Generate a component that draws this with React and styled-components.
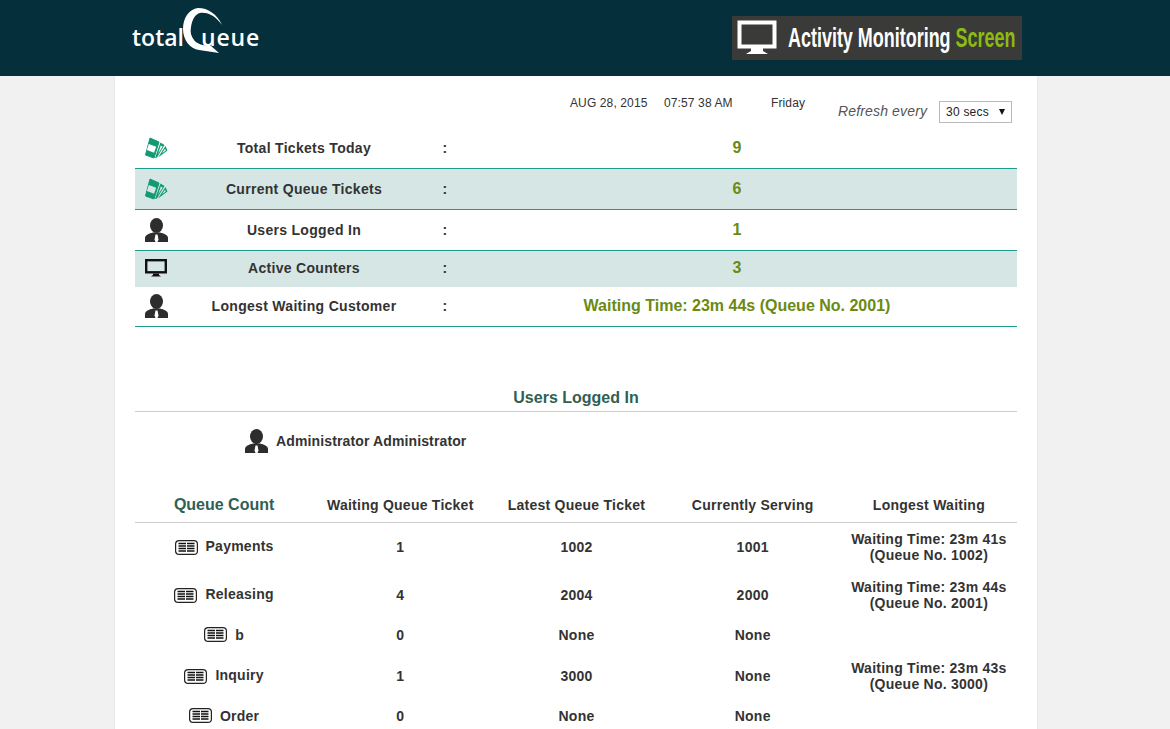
import React from 'react';
import styled, { createGlobalStyle } from 'styled-components';

const GlobalStyle = createGlobalStyle`
  html, body {
    margin: 0;
    height: 100%;
    overflow: hidden;
    background: #f1f1f1;
    font-family: "Liberation Sans", Arial, sans-serif;
    color: #333;
  }
`;

const Header = styled.header`
  height: 76px;
  background: #042f3b;
  display: flex;
  align-items: flex-start;
  justify-content: space-between;
  padding: 0 148px 0 132px;
`;

const Logo = styled.div`
  position: relative;
  width: 128px;
  height: 76px;
  display: flex;
  justify-content: space-between;
  padding-top: 22px;
  box-sizing: border-box;
  color: #fff;
  font: 600 23px/30px "Open Sans", sans-serif;
`;

const LogoPart = styled.span`
  letter-spacing: ${p => p.$ls}px;
`;

const LogoQ = styled.svg`
  position: absolute;
  left: 49px;
  top: 7px;
`;

const Banner = styled.div`
  margin-top: 16px;
  width: 290px;
  height: 44px;
  background: #3a3a38;
  display: flex;
  align-items: center;
  padding-left: 5px;
  box-sizing: border-box;
  gap: 11px;
  svg { flex: none; }
`;

const BannerTitle = styled.div`
  flex: none;
  font: 700 27px/44px "Liberation Sans", sans-serif;
  color: #fff;
  white-space: nowrap;
  margin-right: -120px;
  transform: scaleX(0.665);
  transform-origin: left center;
  span { color: #8dbb13; }
`;

const Panel = styled.main`
  width: 882px;
  margin-left: 114px;
  padding: 0 20px;
  height: 653px;
  background: #fff;
  border-left: 1px solid #e9e9e9;
  border-right: 1px solid #e9e9e9;
`;

const MetaRow = styled.div`
  height: 51px;
  display: flex;
  padding: 20px 0 0 435px;
  box-sizing: border-box;
  font-size: 12px;
  line-height: 14px;
  letter-spacing: 0.12px;
`;

const MetaItem = styled.span`
  width: ${p => p.$w}px;
  flex: none;
`;

const Refresh = styled.div`
  display: flex;
  align-items: center;
  height: 22px;
  margin-top: 4px;
  font: italic 14px "Liberation Sans", sans-serif;
  letter-spacing: 0.15px;
  color: #555;
  gap: 12px;
`;

const SelectBox = styled.div`
  width: 73px;
  height: 22px;
  margin-top: 2px;
  box-sizing: border-box;
  border: 1px solid #bbb;
  padding: 0 6px;
  display: flex;
  align-items: center;
  justify-content: space-between;
  font: 12px "Liberation Sans", sans-serif;
  color: #222;
  letter-spacing: 0.2px;
  &::after {
    content: "";
    border: 3.5px solid transparent;
    border-top: 6px solid #111;
    border-bottom: 0;
  }
`;

const StatRow = styled.div`
  display: grid;
  grid-template-columns: 40px 258px 24px 1fr;
  align-items: center;
  box-sizing: border-box;
  height: ${p => p.$h}px;
  padding-bottom: ${p => p.$lift || 0}px;
  background: ${p => (p.$shade ? '#d5e6e5' : 'transparent')};
  border-bottom: ${p => (p.$line ? '1px solid #1e9c8e' : '0')};
`;

const IconCell = styled.div`
  display: flex;
  padding-left: 10px;
`;

const StatLabel = styled.div`
  text-align: center;
  font-size: 14px;
  font-weight: 700;
  letter-spacing: 0.3px;
`;

const Colon = styled(StatLabel)``;

const StatValue = styled.div`
  text-align: center;
  font-size: 16px;
  font-weight: 700;
  color: #6a8a12;
`;

const SectionTitle = styled.h2`
  margin: 60px 0 0;
  height: 24px;
  font-size: 16px;
  line-height: 22px;
  font-weight: 700;
  text-align: center;
  color: #2f5f55;
  border-bottom: 1px solid #ccc;
`;

const UserRow = styled.div`
  display: flex;
  align-items: center;
  gap: 8px;
  padding: 17px 0 0 110px;
  font-size: 14px;
  font-weight: 700;
  letter-spacing: 0.13px;
`;

const QueueGrid = styled.div`
  display: grid;
  grid-template-columns: repeat(5, 1fr);
  align-items: center;
  box-sizing: border-box;
  padding-left: 1px;
  padding-bottom: ${p => (p.$short ? 2 : 0)}px;
  height: ${p => p.$h}px;
  text-align: center;
  font-size: 14px;
  font-weight: 700;
  letter-spacing: 0.25px;
  line-height: 16px;
`;

const QueueHead = styled(QueueGrid)`
  margin-top: 33px;
  padding-top: 2px;
  border-bottom: 1px solid #ccc;
`;

const QueueTitle = styled.div`
  font-size: 16px;
  letter-spacing: 0;
  color: #2f5f55;
`;

const QueueName = styled.div`
  display: flex;
  align-items: center;
  justify-content: center;
  gap: 8px;
  margin-top: ${p => (p.$short ? 0 : -2)}px;
  svg { flex: none; margin-top: ${p => (p.$short ? 0 : 2)}px; }
`;

const TicketIcon = ({ bg = '#fff' }) => (
  <svg width="23" height="22" viewBox="0 0 23 22">
    <path d="M20.500 9L22.500 13.500L13 20.500Z" fill="#129a72" />
    <path d="M20 11.800L20.800 13.400L17 16.200Z" fill={bg} />
    <path d="M15.500 5.500L19.500 8L12 20.500L10 21Z" fill="#129a72" />
    <path d="M15.800 8.500L17.600 9.500L13 17Z" fill={bg} />
    <path d="M5 1L14 5L9 21L0.500 18Z" fill="#129a72" stroke="#129a72" strokeWidth="1" strokeLinejoin="round" />
    <path d="M3.800 7L11.200 9.800L9 15.800L1.900 13Z" fill={bg} />
  </svg>
);

const PersonIcon = () => (
  <svg width="23" height="24" viewBox="0 0 23 24">
    <ellipse cx="11.500" cy="7.500" rx="6.500" ry="7.500" fill="#2d2d2d" />
    <path d="M0 24v-4c0-3 4-4.500 8-5.500h7c4 1 8 2.500 8 5.500v4z" fill="#2d2d2d" />
    <path d="M10.500 16.500h2l1 5-1 2.500h-2l-1-2.500z" fill="#fff" />
  </svg>
);

const MonitorIcon = () => (
  <svg width="22" height="18" viewBox="0 0 22 18">
    <rect x="1.200" y="1.200" width="19.600" height="12.100" fill="none" stroke="#111" strokeWidth="2.400" />
    <path d="M8 14.500h6v1.500l2 1.500H6l2-1.500z" fill="#111" />
  </svg>
);

const QueueIcon = () => (
  <svg width="23" height="15" viewBox="0 0 23 15">
    <rect x="0.600" y="0.600" width="21.800" height="13.800" rx="3.500" fill="#fff" stroke="#222" strokeWidth="1.200" />
    <path d="M3.500 3.500h7.500M12 3.500h7.500M3.500 6h7.500M12 6h7.500M3.500 8.500h7.500M12 8.500h7.500M3.500 11h7.500M12 11h7.500" stroke="#111" strokeWidth="1.500" />
  </svg>
);

const stats = [
  { icon: <TicketIcon />, label: 'Total Tickets Today', value: '9', h: 42, line: true },
  { icon: <TicketIcon bg="#d5e6e5" />, label: 'Current Queue Tickets', value: '6', h: 41, line: true, shade: true },
  { icon: <PersonIcon />, label: 'Users Logged In', value: '1', h: 41, line: true },
  { icon: <MonitorIcon />, label: 'Active Counters', value: '3', h: 36, shade: true, lift: 2 },
  { icon: <PersonIcon />, label: 'Longest Waiting Customer', value: 'Waiting Time: 23m 44s (Queue No. 2001)', h: 40, line: true, lift: 2 },
];

const queues = [
  { name: 'Payments', waiting: 1, latest: '1002', serving: '1001', longest: ['Waiting Time: 23m 41s', '(Queue No. 1002)'] },
  { name: 'Releasing', waiting: 4, latest: '2004', serving: '2000', longest: ['Waiting Time: 23m 44s', '(Queue No. 2001)'] },
  { name: 'b', waiting: 0, latest: 'None', serving: 'None' },
  { name: 'Inquiry', waiting: 1, latest: '3000', serving: 'None', longest: ['Waiting Time: 23m 43s', '(Queue No. 3000)'] },
  { name: 'Order', waiting: 0, latest: 'None', serving: 'None' },
];

const App = () => (
  <>
    <GlobalStyle />
    <Header>
      <Logo>
        <LogoPart $ls={0}>total</LogoPart>
        <LogoQ width="44" height="48" viewBox="0 0 44 48">
          <path
            d="M41 18C36 7 27 1 17 1C8 2 2 11 2 22C2 33 9 42 18 43L38 46L29 38C22 39 16 37 13 33C10 29 9 25 10 20C11 13 14 7 19 6C28 5 35 10 41 18Z"
            fill="#fff"
          />
        </LogoQ>
        <LogoPart $ls={0.8}>ueue</LogoPart>
      </Logo>
      <Banner>
        <svg width="40" height="36" viewBox="0 0 40 36">
          <rect x="2.500" y="2.500" width="35" height="24" fill="none" stroke="#fff" strokeWidth="4" />
          <path d="M14 28h12v3l5 3H9l5-3z" fill="#fff" />
        </svg>
        <BannerTitle>
          Activity Monitoring <span>Screen</span>
        </BannerTitle>
      </Banner>
    </Header>
    <Panel>
      <MetaRow>
        <MetaItem $w={94}>AUG 28, 2015</MetaItem>
        <MetaItem $w={107}>07:57 38 AM</MetaItem>
        <MetaItem $w={67}>Friday</MetaItem>
        <Refresh>
          Refresh every
          <SelectBox>30 secs</SelectBox>
        </Refresh>
      </MetaRow>

      {stats.map(s => (
        <StatRow key={s.label} $h={s.h} $line={s.line} $shade={s.shade} $lift={s.lift}>
          <IconCell>{s.icon}</IconCell>
          <StatLabel>{s.label}</StatLabel>
          <Colon>:</Colon>
          <StatValue>{s.value}</StatValue>
        </StatRow>
      ))}

      <SectionTitle>Users Logged In</SectionTitle>
      <UserRow>
        <PersonIcon />
        Administrator Administrator
      </UserRow>

      <QueueHead $h={37}>
        <QueueTitle>Queue Count</QueueTitle>
        <div>Waiting Queue Ticket</div>
        <div>Latest Queue Ticket</div>
        <div>Currently Serving</div>
        <div>Longest Waiting</div>
      </QueueHead>
      {queues.map(q => (
        <QueueGrid key={q.name} $h={q.longest ? 48 : 33} $short={!q.longest}>
          <QueueName $short={!q.longest}>
            <QueueIcon />
            {q.name}
          </QueueName>
          <div>{q.waiting}</div>
          <div>{q.latest}</div>
          <div>{q.serving}</div>
          <div>
            {q.longest && q.longest.map(line => <div key={line}>{line}</div>)}
          </div>
        </QueueGrid>
      ))}
    </Panel>
  </>
);

export default App;
